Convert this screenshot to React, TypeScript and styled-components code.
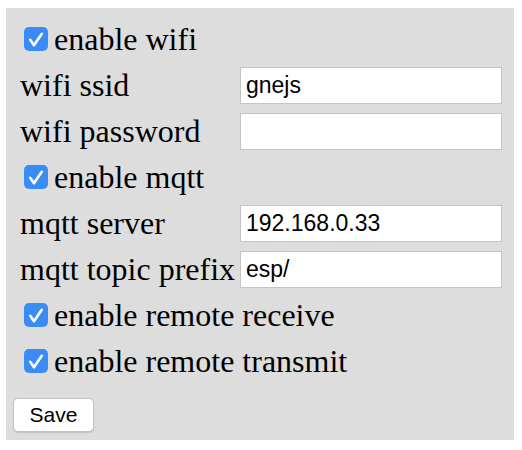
import React from "react";
import styled, { createGlobalStyle } from "styled-components";

const Global = createGlobalStyle`
  html, body { margin: 0; padding: 0; background: #ffffff; }
  body { font-family: "Liberation Serif", "Times New Roman", serif; }
`;

const Panel = styled.form`
  box-sizing: border-box;
  margin: 8px 0 0 6px;
  width: 508px;
  height: 432px;
  padding: 8px 12px 8px 7px;
  background: #dddddd;
  display: flex;
  flex-direction: column;
`;

const Grid = styled.div`
  margin-left: 7px;
  display: grid;
  grid-template-columns: 220px 262px;
  grid-auto-rows: 46px;
  align-items: center;
`;

const Label = styled.label`
  font-family: "Liberation Serif", "Times New Roman", serif;
  font-size: 32px;
  color: #000;
  line-height: 46px;
  white-space: nowrap;
`;

const CheckRow = styled.label`
  grid-column: 1 / span 2;
  display: flex;
  align-items: center;
  gap: 6px;
  padding-left: 4px;
  font-family: "Liberation Serif", "Times New Roman", serif;
  font-size: 32px;
  color: #000;
  line-height: 46px;
  white-space: nowrap;
`;

const Box = styled.span`
  width: 24px;
  height: 24px;
  border-radius: 5px;
  background: #3a8cf4;
  display: inline-flex;
  align-items: center;
  justify-content: center;
  flex: none;
`;

const TextInput = styled.input`
  box-sizing: border-box;
  width: 262px;
  height: 37px;
  margin: 0;
  padding: 0 5px;
  border: 1px solid #c4c4c4;
  background: #ffffff;
  font-family: "Liberation Sans", Arial, sans-serif;
  font-size: 23px;
  color: #000;
  outline: none;
`;

const SaveButton = styled.button`
  margin-top: 14px;
  align-self: flex-start;
  width: 81px;
  height: 34px;
  padding: 0;
  border: 1px solid #c2c2c2;
  border-radius: 5px;
  background: #ffffff;
  box-shadow: 0 1px 1px rgba(0, 0, 0, 0.12);
  font-family: "Liberation Sans", Arial, sans-serif;
  font-size: 21px;
  color: #000;
`;

const Check = ({ label }: { label: string }) => (
  <CheckRow>
    <Box>
      <svg width="24" height="24" viewBox="0 0 24 24">
        <path
          d="M6.2 12.8 L10 18.2 L17.8 6.8"
          fill="none"
          stroke="#ffffff"
          strokeWidth="2.6"
          strokeLinecap="round"
          strokeLinejoin="round"
        />
      </svg>
    </Box>
    {label}
  </CheckRow>
);

const Field = ({ label, value }: { label: string; value: string }) => (
  <>
    <Label>{label}</Label>
    <TextInput type="text" defaultValue={value} />
  </>
);

export default function App() {
  return (
    <>
      <Global />
      <Panel onSubmit={(e) => e.preventDefault()}>
        <Grid>
          <Check label="enable wifi" />
          <Field label="wifi ssid" value="gnejs" />
          <Field label="wifi password" value="" />
          <Check label="enable mqtt" />
          <Field label="mqtt server" value="192.168.0.33" />
          <Field label="mqtt topic prefix" value="esp/" />
          <Check label="enable remote receive" />
          <Check label="enable remote transmit" />
        </Grid>
        <SaveButton type="submit">Save</SaveButton>
      </Panel>
    </>
  );
}
